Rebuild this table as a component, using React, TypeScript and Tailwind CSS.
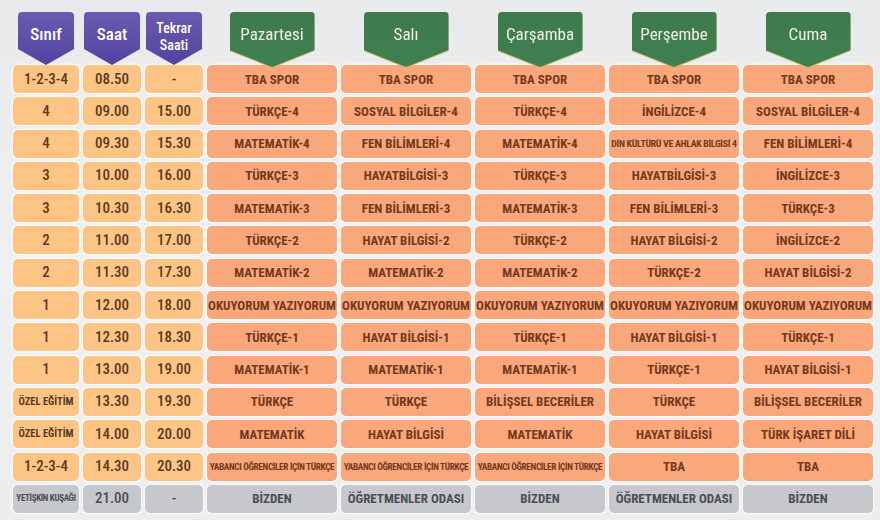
type Kind = "y" | "o" | "g";

const rows: { c: string; t: string; r: string; d: string[]; cs?: boolean; small?: number[]; gray?: boolean }[] = [
  { c: "1-2-3-4", t: "08.50", r: "-", d: ["TBA SPOR", "TBA SPOR", "TBA SPOR", "TBA SPOR", "TBA SPOR"] },
  { c: "4", t: "09.00", r: "15.00", d: ["TÜRKÇE-4", "SOSYAL BİLGİLER-4", "TÜRKÇE-4", "İNGİLİZCE-4", "SOSYAL BİLGİLER-4"] },
  { c: "4", t: "09.30", r: "15.30", d: ["MATEMATİK-4", "FEN BİLİMLERİ-4", "MATEMATİK-4", "DİN KÜLTÜRÜ VE AHLAK BİLGİSİ 4", "FEN BİLİMLERİ-4"], small: [3] },
  { c: "3", t: "10.00", r: "16.00", d: ["TÜRKÇE-3", "HAYATBİLGİSİ-3", "TÜRKÇE-3", "HAYATBİLGİSİ-3", "İNGİLİZCE-3"] },
  { c: "3", t: "10.30", r: "16.30", d: ["MATEMATİK-3", "FEN BİLİMLERİ-3", "MATEMATİK-3", "FEN BİLİMLERİ-3", "TÜRKÇE-3"] },
  { c: "2", t: "11.00", r: "17.00", d: ["TÜRKÇE-2", "HAYAT BİLGİSİ-2", "TÜRKÇE-2", "HAYAT BİLGİSİ-2", "İNGİLİZCE-2"] },
  { c: "2", t: "11.30", r: "17.30", d: ["MATEMATİK-2", "MATEMATİK-2", "MATEMATİK-2", "TÜRKÇE-2", "HAYAT BİLGİSİ-2"] },
  { c: "1", t: "12.00", r: "18.00", d: ["OKUYORUM YAZIYORUM", "OKUYORUM YAZIYORUM", "OKUYORUM YAZIYORUM", "OKUYORUM YAZIYORUM", "OKUYORUM YAZIYORUM"] },
  { c: "1", t: "12.30", r: "18.30", d: ["TÜRKÇE-1", "HAYAT BİLGİSİ-1", "TÜRKÇE-1", "HAYAT BİLGİSİ-1", "TÜRKÇE-1"] },
  { c: "1", t: "13.00", r: "19.00", d: ["MATEMATİK-1", "MATEMATİK-1", "MATEMATİK-1", "TÜRKÇE-1", "HAYAT BİLGİSİ-1"] },
  { c: "ÖZEL EĞİTİM", cs: true, t: "13.30", r: "19.30", d: ["TÜRKÇE", "TÜRKÇE", "BİLİŞSEL BECERİLER", "TÜRKÇE", "BİLİŞSEL BECERİLER"] },
  { c: "ÖZEL EĞİTİM", cs: true, t: "14.00", r: "20.00", d: ["MATEMATİK", "HAYAT BİLGİSİ", "MATEMATİK", "HAYAT BİLGİSİ", "TÜRK İŞARET DİLİ"] },
  { c: "1-2-3-4", t: "14.30", r: "20.30", d: ["YABANCI ÖĞRENCİLER İÇİN TÜRKÇE", "YABANCI ÖĞRENCİLER İÇİN TÜRKÇE", "YABANCI ÖĞRENCİLER İÇİN TÜRKÇE", "TBA", "TBA"], small: [0, 1, 2] },
  { c: "YETİŞKİN KUŞAĞI", cs: true, t: "21.00", r: "-", d: ["BİZDEN", "ÖĞRETMENLER ODASI", "BİZDEN", "ÖĞRETMENLER ODASI", "BİZDEN"], gray: true },
];

const days = ["Pazartesi", "Salı", "Çarşamba", "Perşembe", "Cuma"];

const font = { fontFamily: '"Roboto Condensed", "Open Sans Condensed", sans-serif' };

function Cell({ kind, children, cls }: { kind: Kind; children: React.ReactNode; cls: string }) {
  const bg =
    kind === "y"
      ? "bg-[#fdc585] text-[#5a3921]"
      : kind === "o"
      ? "bg-[#f9a77b] text-[#743820]"
      : "bg-[#c7c8cc] text-[#4b4e55]";
  return (
    <div
      className={`flex items-center justify-center rounded-[5px] whitespace-nowrap leading-none shadow-[0_0_2px_1px_rgba(255,255,255,0.95)] ${bg} ${cls}`}
    >
      {children}
    </div>
  );
}

function PurpleShield({ children }: { children: React.ReactNode }) {
  return (
    <div className="flex justify-center">
      <div className="w-[56px] h-[53px] rounded-t-[4px] bg-gradient-to-b from-[#6a5ab0] to-[#5343a0] [clip-path:polygon(0_0,100%_0,100%_70%,50%_100%,0_70%)] flex items-start justify-center pt-[7px] text-white text-center">
        {children}
      </div>
    </div>
  );
}

function GreenShield({ label }: { label: string }) {
  return (
    <div className="flex justify-center [filter:drop-shadow(0_1px_0.5px_#cdb766)]">
      <div className="w-[85px] h-[55px] rounded-t-[4px] bg-gradient-to-b from-[#3e7a4c] to-[#3f8150] [clip-path:polygon(0_0,100%_0,100%_69%,50%_100%,0_69%)] flex items-start justify-center pt-[12px] text-[#f4f1e0] text-[17px] leading-[20px]">
        {label}
      </div>
    </div>
  );
}

export default function App() {
  return (
    <div
      className="w-[880px] h-[520px] overflow-hidden bg-gradient-to-b from-[#e9eaec] via-[#eff0f1] to-[#eceded] pl-[13px] pt-[12px]"
      style={font}
    >
      <div className="relative z-10 grid grid-cols-[66px_58px_58px_repeat(5,130px)] gap-x-[4px] h-[53px]">
        <PurpleShield>
          <span className="text-[17px] font-medium leading-[20px] mt-[5px]">Sınıf</span>
        </PurpleShield>
        <PurpleShield>
          <span className="text-[17px] font-medium leading-[20px] mt-[5px]">Saat</span>
        </PurpleShield>
        <PurpleShield>
          <span className="flex flex-col items-center text-[14px] font-medium leading-[16.5px] mt-[1px]">
            <span>Tekrar</span>
            <span>Saati</span>
          </span>
        </PurpleShield>
        {days.map((d) => (
          <GreenShield key={d} label={d} />
        ))}
      </div>
      <div className="grid grid-cols-[66px_58px_58px_repeat(5,130px)] gap-x-[4px] gap-y-[4.3px] auto-rows-[28px]">
        {rows.map((r, i) => {
          const left: Kind = r.gray ? "g" : "y";
          const right: Kind = r.gray ? "g" : "o";
          return [
            <Cell
              key={`c${i}`}
              kind={left}
              cls={
                r.cs
                  ? r.gray
                    ? "text-[9px] font-bold tracking-[-0.35px]"
                    : "text-[10.5px] font-bold"
                  : "text-[15px] font-medium"
              }
            >
              {r.c}
            </Cell>,
            <Cell key={`t${i}`} kind={left} cls="text-[15px] font-medium">
              {r.t}
            </Cell>,
            <Cell key={`r${i}`} kind={left} cls="text-[15px] font-medium">
              {r.r}
            </Cell>,
            ...r.d.map((s, j) => (
              <Cell
                key={`d${i}-${j}`}
                kind={right}
                cls={
                  r.small?.includes(j)
                    ? r.d[j].startsWith("YABANCI")
                      ? "text-[9.3px] font-bold tracking-[-0.35px]"
                      : "text-[9.8px] font-bold tracking-[-0.3px]"
                    : "text-[13px] font-bold"
                }
              >
                {s}
              </Cell>
            )),
          ];
        })}
      </div>
    </div>
  );
}
